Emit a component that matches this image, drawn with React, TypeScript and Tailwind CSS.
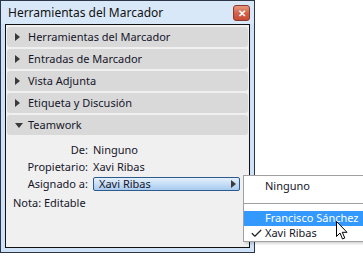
import { Check } from "lucide-react";

const sections = [
  "Herramientas del Marcador",
  "Entradas de Marcador",
  "Vista Adjunta",
  "Etiqueta y Discusión",
];

function RightTri() {
  return (
    <svg width="5" height="8" viewBox="0 0 5 8" className="shrink-0">
      <path d="M0 0 L5 4 L0 8 Z" fill="#3a3a3a" />
    </svg>
  );
}

function DownTri() {
  return (
    <svg width="8" height="5" viewBox="0 0 8 5" className="shrink-0">
      <path d="M0 0 L8 0 L4 5 Z" fill="#3a3a3a" />
    </svg>
  );
}

function SectionRow({ label, open }: { label: string; open?: boolean }) {
  return (
    <div className="flex items-center h-[20px] rounded-[3px] bg-[#d9d9d9] pl-[8px]">
      <div className="w-[8px] flex items-center">{open ? <DownTri /> : <RightTri />}</div>
      <span className="ml-[5px] text-[11px] text-[#16162a]">{label}</span>
    </div>
  );
}

function Cursor() {
  return (
    <svg width="12" height="19" viewBox="0 0 12 19" className="absolute left-[336px] top-[221px]">
      <path
        d="M0.5 0.5 L0.5 15.5 L4 12 L6.5 18 L8.8 17 L6.3 11.3 L11 11.3 Z"
        fill="#fff"
        stroke="#000"
        strokeWidth="1"
        strokeLinejoin="round"
      />
    </svg>
  );
}

export default function App() {
  return (
    <div
      className="relative w-[363px] h-[261px] bg-white overflow-hidden"
      style={{ fontFamily: '"Noto Sans", "Open Sans", sans-serif' }}
    >
      <div className="w-[255px] h-[253px] border border-[#2d3646] bg-[#cfe1f6] flex flex-col">
        <div className="h-[23px] flex items-center justify-between pl-[7px] pr-[4px] bg-[#d9e8f8]">
          <span className="text-[12px] text-[#111]">Herramientas del Marcador</span>
          <div className="w-[17px] h-[16px] rounded-[3px] border border-[#8a3a2c] bg-gradient-to-b from-[#e59a83] via-[#d4614a] to-[#c84a35] flex items-center justify-center">
            <span className="text-[10px] font-bold leading-none text-white">✕</span>
          </div>
        </div>
        <div className="mx-[4px] mb-[4px] flex-1 border border-[#111] bg-[#f0f0f0] px-[1px] pt-[2px] flex flex-col gap-[2px]">
          {sections.map((s) => (
            <SectionRow key={s} label={s} />
          ))}
          <SectionRow label="Teamwork" open />
          <div className="mt-[5px] grid grid-cols-[81px_1fr] gap-x-[5px] gap-y-[2px] text-[11px] leading-[15px] text-[#16162a] items-center">
            <span className="text-right">De:</span>
            <span>Ninguno</span>
            <span className="text-right">Propietario:</span>
            <span>Xavi Ribas</span>
            <span className="text-right">Asignado a:</span>
            <div className="flex items-center justify-between h-[14px] w-[147px] rounded-[2px] border border-[#2c5a8a] bg-gradient-to-b from-[#e4f0fc] to-[#a8cbef] pl-[5px] pr-[3px]">
              <span className="leading-none">Xavi Ribas</span>
              <RightTri />
            </div>
          </div>
          <div className="mt-[2px] pl-[6px] text-[11px] text-[#16162a]">Nota: Editable</div>
        </div>
      </div>

      <div className="absolute left-[243px] top-[175px] w-[130px] h-[67px] border border-[#a0a0a0] bg-white shadow-[2px_2px_2px_rgba(0,0,0,0.15)] text-[11px]">
        <div className="h-[20px] flex items-center pl-[21px] text-[#16162a]">Ninguno</div>
        <div className="h-[15px] flex items-center">
          <div className="w-full border-t border-[#a0a0a0]" />
        </div>
        <div className="h-[15px] bg-[#3399ff] flex items-center pl-[21px] text-white">Francisco Sánchez</div>
        <div className="h-[15px] flex items-center pl-[6px] text-[#16162a]">
          <Check size={13} strokeWidth={2.2} color="#222" />
          <span className="ml-[2px]">Xavi Ribas</span>
        </div>
      </div>
      <Cursor />
    </div>
  );
}
